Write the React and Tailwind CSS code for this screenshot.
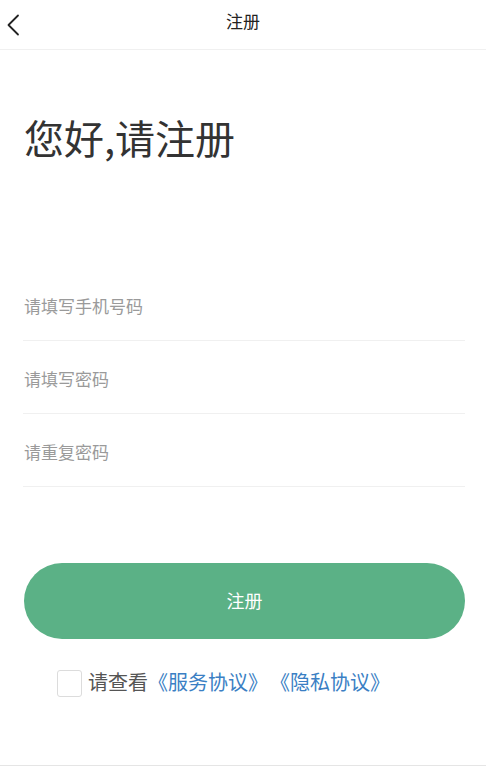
import React, { useState } from "react";

const FONT = { fontFamily: "'Noto Sans CJK SC', 'Noto Sans', sans-serif" };

function Field({ placeholder, type = "text" }) {
  return (
    <div className="h-[73px] flex items-center border-b border-[#f0f0f0]">
      <input
        type={type}
        placeholder={placeholder}
        className="w-full bg-transparent outline-none text-[17px] text-[#333] placeholder:text-[#9a9a9a] pl-px mt-[3px]"
      />
    </div>
  );
}

export default function App() {
  const [agree, setAgree] = useState(false);

  return (
    <div className="w-[486px] h-[770px] bg-white flex flex-col" style={FONT}>
      <div className="h-[50px] shrink-0 relative flex items-center justify-center border-b border-[#f0f0f0]">
        <button className="absolute left-[4px] top-[12px] p-0.5">
          <svg width="14" height="22" viewBox="0 0 14 22" fill="none">
            <path d="M12 1.5 L2.5 11 L12 20.5" stroke="#222" strokeWidth="1.8" strokeLinecap="round" strokeLinejoin="round" />
          </svg>
        </button>
        <span className="text-[17px] text-[#222] -mt-[7px]">注册</span>
      </div>

      <div className="pl-[23px] pr-[21px]">
        <h1 className="text-[40px] leading-none text-[#333] mt-[67px] ml-px font-normal">您好,请注册</h1>

        <div className="mt-[111px]">
          <Field placeholder="请填写手机号码" />
          <Field placeholder="请填写密码" type="password" />
          <Field placeholder="请重复密码" type="password" />
        </div>

        <button className="mt-[76px] ml-px w-[441px] h-[76px] rounded-full bg-[#5bb186] text-white text-[18px] flex items-center justify-center">
          <span className="-mt-[2px]">注册</span>
        </button>

        <div className="mt-[30px] ml-[34px] flex items-center">
          <button
            onClick={() => setAgree(!agree)}
            className="w-[25px] h-[27px] rounded-[3px] border border-[#dcdcdc] bg-white shrink-0 flex items-center justify-center"
          >
            {agree && (
              <svg width="16" height="16" viewBox="0 0 16 16">
                <path d="M3 8.5 L6.5 12 L13 4.5" stroke="#5bb186" strokeWidth="2" fill="none" />
              </svg>
            )}
          </button>
          <span className="ml-[6px] text-[20px] text-[#555] -mt-[2px] flex">
            <span>请查看</span>
            <span className="ml-[10px] text-[#3b7fc4] [font-feature-settings:'halt']">《服务协议》</span>
            <span className="ml-[22px] text-[#3b7fc4] [font-feature-settings:'halt']">《隐私协议》</span>
          </span>
        </div>
      </div>

      <div className="mt-auto mb-[4px] h-px bg-[#e5e5e5]" />
    </div>
  );
}
